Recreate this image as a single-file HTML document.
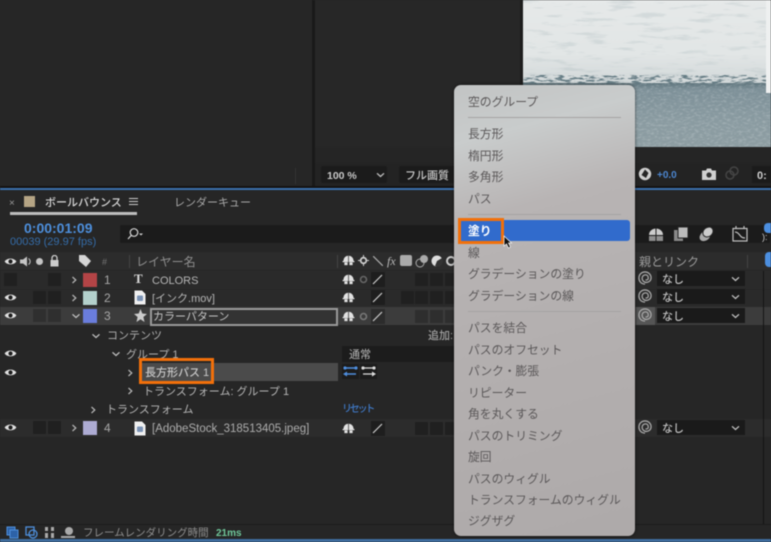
<!DOCTYPE html>
<html lang="ja"><head><meta charset="utf-8"><style>
html,body{margin:0;padding:0;background:#262626}
#p{position:relative;width:771px;height:542px;overflow:hidden;background:#262626;font-family:"Liberation Sans","Noto Sans CJK JP",sans-serif;filter:blur(.5px)}
#p div,#p span,#p svg{position:absolute}
.t{white-space:nowrap;font-size:11px;line-height:14px;color:#b0b0b0}
.d{margin-top:1px}
.b5{font-weight:500}
.m{left:468px;font-size:11.8px;line-height:16px;color:#5b5859;white-space:nowrap}
.sep{left:468px;width:153px;height:1px;background:#a5a3a3}
.box{width:13px;height:13px;background:#202020}
.sw{left:83px;width:14px;height:14px}
.sel{left:657px;width:88px;height:15px;background:#1a1a1a}
</style></head><body><div id="p">
<svg width="0" height="0">
<defs>
<symbol id="eye" viewBox="0 0 14 10"><path d="M.5 5C3 .8 11 .8 13.500 5 11 9.200 3 9.200 .5 5Z" fill="#e0e0e0"/><circle cx="7" cy="5" r="2.300" fill="#1c1c1c"/></symbol>
<symbol id="shy" viewBox="0 0 14 12"><path d="M1.500 6.500C1.500 2.500 4.500 .8 7 .8s5.500 1.700 5.500 5.700Z" fill="#e2e2e2"/><path d="M.5 6.500h13v1.300H.5Z" fill="#e2e2e2"/><path d="M2.500 8v3h3.500V8M8 8v3h3.500V8" fill="#e2e2e2"/><path d="M7 1v10.500" stroke="#333" stroke-width=".8"/></symbol>
<symbol id="sp" viewBox="0 0 12 12"><path d="M6 11.200C2.500 11.200 .8 8.500 .8 6 .8 3 3 .8 6 .8s5.200 2.400 5.200 5c0 2.500-2 4-4 4S3.500 8.300 3.500 6.300 5 3.300 6.500 3.300 8.800 4.500 8.800 6 7.500 8 6.500 7.500" fill="none" stroke="#a8a8a8" stroke-width="1.100"/></symbol>
<symbol id="doc" viewBox="0 0 12 15"><path d="M.5.5h7.500l3.500 3.500v10.500H.5Z" fill="#f0f0f0"/><rect x="3" y="5.500" width="6" height="5.500" rx="1" fill="#7b93b5"/></symbol>
<symbol id="ch" viewBox="0 0 8 8"><path d="M2.500 1 5.800 4 2.500 7" fill="none" stroke="#b5b5b5" stroke-width="1.200"/></symbol>
<symbol id="dn" viewBox="0 0 10 8"><path d="M1.500 2.300 5 5.500l3.500-3.200" fill="none" stroke="#c0c0c0" stroke-width="1.300"/></symbol>
<filter id="cr" x="0" y="0" width="100%" height="100%"><feTurbulence type="fractalNoise" baseFrequency=".035 .22" numOctaves="5" seed="4"/><feColorMatrix values="0 0 0 0 .42 0 0 0 0 .5 0 0 0 0 .52 5 0 0 0 -2.750"/></filter>
<filter id="fl" x="0" y="0" width="100%" height="100%"><feTurbulence type="fractalNoise" baseFrequency=".25 .5" numOctaves="3" seed="9"/><feColorMatrix values="0 0 0 0 .82 0 0 0 0 .86 0 0 0 0 .87 3 0 0 0 -1.350"/></filter>
<filter id="ed" x="0" y="0" width="100%" height="100%"><feTurbulence type="fractalNoise" baseFrequency=".12 .5" numOctaves="3" seed="2"/><feColorMatrix values="0 0 0 0 .13 0 0 0 0 .2 0 0 0 0 .23 6 0 0 0 -2.900"/></filter>
</defs></svg>

<!-- top panels -->
<div style="left:312px;top:0;width:3px;height:186px;background:#191919"></div>
<div style="left:315px;top:0;width:205px;height:163px;background:#272727"></div>
<div style="left:520px;top:0;width:3px;height:163px;background:#1d1d1d"></div>
<div style="left:523px;top:83px;width:248px;height:64px;background:linear-gradient(180deg,#5f757d,#7d9098 10%,#8a9ba1 60%,#8d9da2)"></div>
<svg style="left:523px;top:83px;opacity:.22" width="248" height="64"><rect width="248" height="64" filter="url(#fl)"/></svg>
<div style="left:523px;top:0;width:243px;height:83px;background:linear-gradient(180deg,#e6e9e9,#e2e6e6 65%,#d2d8d9)"></div>
<svg style="left:523px;top:0;opacity:.3" width="243" height="83"><rect width="243" height="83" filter="url(#cr)"/></svg>
<svg style="left:523px;top:0" width="243" height="83"><rect y="75" width="243" height="8" filter="url(#ed)"/></svg>
<div style="left:766px;top:0;width:5px;height:93px;background:#eef0f0"></div>
<div style="left:315px;top:147px;width:456px;height:16px;background:#252525"></div>
<div style="left:315px;top:163px;width:456px;height:23px;background:#232323"></div>
<div style="left:295px;top:168px;width:1px;height:16px;background:#333"></div>
<div style="left:0;top:186px;width:771px;height:2px;background:#141212"></div>
<div style="left:0;top:188px;width:771px;height:2px;background:#3a70ad"></div>

<div style="left:321px;top:166px;width:66px;height:17px;background:#1b1b1b;border-radius:2px"></div>
<span class="t d" style="left:327px;top:168px;font-size:10.500px;font-weight:700;color:#c8c8c8">100 %</span>
<svg style="left:375px;top:171px" width="11" height="8"><use href="#dn"/></svg>
<div style="left:399px;top:166px;width:70px;height:17px;background:#1b1b1b;border-radius:2px"></div>
<span class="t d b5" style="left:405px;top:168px;color:#c8c8c8">フル画質</span>
<svg style="left:638px;top:167px" width="14" height="14" viewBox="0 0 14 14"><circle cx="7" cy="7" r="6.200" fill="#cfcfcf"/><path d="M7 2.500 10.500 6 8 11 3.500 8Z" fill="#262626"/></svg>
<span class="t d" style="left:657px;top:168px;font-size:10px;color:#4c86d0;font-weight:700">+0.0</span>
<svg style="left:701px;top:168px" width="16" height="13" viewBox="0 0 16 13"><path d="M1 2.500h4l1-2h4l1 2h4V12H1Z" fill="#d0d0d0"/><circle cx="8" cy="7" r="2.600" fill="#333"/></svg>
<svg style="left:724px;top:166px" width="16" height="15" viewBox="0 0 16 15" fill="none" stroke="#444" stroke-width="1.500"><circle cx="6" cy="9" r="4"/><circle cx="10" cy="5" r="4"/></svg>
<div style="left:752px;top:166px;width:19px;height:17px;background:#1b1b1b"></div>
<span class="t d" style="left:757px;top:168px;color:#ccc;font-weight:700">0:</span>

<!-- tabs -->
<span class="t" style="left:9px;top:197px;font-size:10px;color:#999">×</span>
<div style="left:24px;top:196px;width:11px;height:11px;background:#b5a484"></div>
<span class="t d b5" style="left:45px;top:195px;color:#d8d8d8">ボールバウンス</span>
<div style="left:129px;top:198px;width:9px;height:1px;background:#ccc;box-shadow:0 3px 0 #ccc,0 6px 0 #ccc"></div>
<div style="left:10px;top:212px;width:127px;height:3px;background:#bdbdbd"></div>
<span class="t d" style="left:174px;top:195px;color:#a8a8a8">レンダーキュー</span>

<!-- time / search -->
<span class="t" style="left:24px;top:220px;font-size:14px;line-height:16px;font-weight:700;color:#4d8fdc">0:00:01:09</span>
<span class="t" style="left:10px;top:235px;font-size:11px;color:#356ca8">00039 (29.97 fps)</span>
<div style="left:120px;top:225px;width:650px;height:18px;background:#1b1b1b;border-radius:2px"></div>
<svg style="left:126px;top:227px" width="18" height="13" viewBox="0 0 18 13" fill="none" stroke="#d5d5d5" stroke-width="1.200"><circle cx="8" cy="5.500" r="3.800"/><path d="M5.300 8.300 2 12"/><path d="M13 6.500h4l-2 2Z" fill="#d5d5d5" stroke="none"/></svg>
<svg style="left:648px;top:227px" width="16" height="15" viewBox="0 0 16 15"><path d="M1 8C1 3.500 5 1.500 8 1.500S15 3.500 15 8Z" fill="#ccc"/><path d="M1 9h14v5H1Z" fill="#8f8f8f"/><path d="M8 1v13" stroke="#222"/></svg>
<svg style="left:673px;top:226px" width="16" height="16" viewBox="0 0 16 16"><path d="M1 4h9v11H1Z" fill="#888"/><path d="M5 1h10v11H5Z" fill="#bbb" stroke="#262626"/></svg>
<svg style="left:698px;top:226px" width="17" height="16" viewBox="0 0 17 16"><ellipse cx="7" cy="10" rx="6" ry="4.500" transform="rotate(-40 7 10)" fill="#aaa"/><ellipse cx="10" cy="6" rx="5.500" ry="4.500" transform="rotate(-40 10 6)" fill="#ccc" stroke="#262626"/></svg>
<svg style="left:732px;top:225px" width="16" height="17" viewBox="0 0 16 17" fill="none" stroke="#c0c0c0" stroke-width="1.200"><path d="M1 3.500h14V16H1ZM4 1v3M12 1v3"/><path d="M3 7c5 0 4 6 10 6"/></svg>
<div style="left:764px;top:223px;width:7px;height:10px;background:#4c8fe0;border-radius:4px 0 0 4px"></div>
<span class="t" style="left:762px;top:230px;font-size:9px;color:#ccc">):</span>

<!-- header -->
<div style="left:0;top:252px;width:771px;height:18px;background:#2c2c2c"></div>
<svg style="left:4px;top:257px" width="13" height="9"><use href="#eye"/></svg>
<svg style="left:19px;top:256px" width="13" height="11" viewBox="0 0 13 11"><path d="M1 3.500h3L8 .5v10L4 7.500H1Z" fill="#c4c4c4"/><path d="M9.500 2.500c2.200 1.500 2.200 4.500 0 6" stroke="#c4c4c4" fill="none"/></svg>
<div style="left:36px;top:258px;width:7px;height:7px;border-radius:50%;background:#c4c4c4"></div>
<svg style="left:50px;top:255px" width="9" height="12" viewBox="0 0 9 12"><path d="M.5 5h8v6.500h-8Z" fill="#ccc"/><path d="M2 5V3a2.500 2.500 0 0 1 5 0v2" fill="none" stroke="#ccc" stroke-width="1.300"/></svg>
<svg style="left:78px;top:254px" width="14" height="14" viewBox="0 0 14 14"><path d="M1 1h6l6 6-5 6-7-6Z" fill="#d5d5d5"/></svg>
<span class="t" style="left:102px;top:255px;font-size:9px;color:#777">#</span>
<div style="left:129px;top:255px;width:1px;height:13px;background:#444"></div>
<span class="t d" style="left:136px;top:254px;font-size:12px;color:#8e8e8e">レイヤー名</span>
<div style="left:337px;top:255px;width:1px;height:13px;background:#444"></div>
<svg style="left:342px;top:255px" width="13" height="11"><use href="#shy"/></svg>
<svg style="left:358px;top:255px" width="11" height="11" viewBox="0 0 11 11"><circle cx="5.500" cy="5.500" r="2.800" fill="none" stroke="#ccc" stroke-width="1.800"/><path d="M5.500 0v11M0 5.500h11" stroke="#ccc" stroke-dasharray="2 7"/></svg>
<svg style="left:373px;top:256px" width="10" height="10"><path d="M0 0 10 10" stroke="#aaa" stroke-width="1.200"/></svg>
<span class="t" style="left:387px;top:254px;font-family:'Liberation Serif',serif;font-style:italic;font-size:12px;color:#bbb">fx</span>
<div style="left:400px;top:255px;width:12px;height:11px;background:#aaa;border-radius:2px"></div>
<svg style="left:415px;top:254px" width="14" height="14" viewBox="0 0 14 14"><circle cx="5" cy="9" r="4" fill="none" stroke="#aaa"/><circle cx="9" cy="5" r="4" fill="#aaa"/></svg>
<svg style="left:431px;top:255px" width="12" height="12" viewBox="0 0 12 12"><circle cx="6" cy="6" r="5.500" fill="#ddd"/><path d="M6 6 11 3A5.500 5.500 0 0 1 4 11Z" fill="#333"/></svg>
<svg style="left:445px;top:255px" width="10" height="12" viewBox="0 0 10 12"><circle cx="6" cy="6" r="4" fill="none" stroke="#ccc" stroke-width="2"/></svg>
<span class="t d" style="left:639px;top:254px;font-size:12px;color:#9b9b9b">親とリンク</span>
<div style="left:747px;top:255px;width:1px;height:13px;background:#444"></div>
<div style="left:765px;top:252px;width:6px;height:15px;background:#4c8fe0;border-radius:4px 0 0 4px"></div>

<!-- rows -->
<div style="left:0;top:271px;width:771px;height:18px;background:#2a2a2a"></div>
<div style="left:0;top:289.500px;width:771px;height:18px;background:#2a2a2a"></div>
<div style="left:0;top:307px;width:771px;height:18px;background:#3c3c3c"></div>
<div style="left:0;top:419px;width:771px;height:18px;background:#2c2c2c"></div>
<div style="left:140px;top:363px;width:198px;height:18px;background:#4b4b4b"></div>
<div style="left:763px;top:271px;width:1px;height:254px;background:#141414"></div>
<div style="left:0;top:524px;width:771px;height:1px;background:#1b1b1b"></div>

<div class="box" style="left:4px;top:273px"></div><div class="box" style="left:48px;top:273px"></div>
<div class="box" style="left:33px;top:291px"></div><div class="box" style="left:48px;top:291px"></div>
<div class="box" style="left:33px;top:309px;background:#2f2f2f"></div><div class="box" style="left:48px;top:309px;background:#2f2f2f"></div>
<div class="box" style="left:33px;top:421px"></div><div class="box" style="left:48px;top:421px"></div>
<svg style="left:4px;top:293px" width="13" height="9"><use href="#eye"/></svg>
<svg style="left:4px;top:311px" width="13" height="9"><use href="#eye"/></svg>
<svg style="left:4px;top:349px" width="13" height="9"><use href="#eye"/></svg>
<svg style="left:4px;top:368px" width="13" height="9"><use href="#eye"/></svg>
<svg style="left:4px;top:423px" width="13" height="9"><use href="#eye"/></svg>

<svg style="left:70px;top:276px" width="8" height="8"><use href="#ch"/></svg>
<svg style="left:70px;top:294px" width="8" height="8"><use href="#ch"/></svg>
<svg style="left:71px;top:312px" width="10" height="8"><use href="#dn"/></svg>
<svg style="left:70px;top:424px" width="8" height="8"><use href="#ch"/></svg>
<div class="sw" style="top:273px;background:#b44446"></div>
<div class="sw" style="top:291px;background:#b3d0cc"></div>
<div class="sw" style="top:309px;background:#6a7ddc"></div>
<div class="sw" style="top:421px;background:#adabd2"></div>
<span class="t" style="left:104px;top:273px;font-size:12px;color:#a8a8a8">1</span>
<span class="t" style="left:104px;top:291px;font-size:12px;color:#a8a8a8">2</span>
<span class="t" style="left:104px;top:309px;font-size:12px;color:#a8a8a8">3</span>
<span class="t" style="left:104px;top:421px;font-size:12px;color:#a8a8a8">4</span>
<span class="t" style="left:134px;top:272px;font-family:'Liberation Serif',serif;font-size:13px;font-weight:700;color:#d8d8d8">T</span>
<svg style="left:134px;top:290px" width="12" height="15"><use href="#doc"/></svg>
<svg style="left:134px;top:309px" width="13" height="13" viewBox="0 0 13 13"><path d="M6.500 0 8.300 4.500 13 5 9.400 8 10.500 13 6.500 10.300 2.500 13 3.600 8 0 5 4.700 4.500Z" fill="#ccc"/></svg>
<svg style="left:134px;top:421px" width="12" height="15"><use href="#doc"/></svg>
<span class="t d" style="left:152px;top:273px;color:#b5b5b5">COLORS</span>
<span class="t d" style="left:152px;top:291px;color:#b5b5b5">[インク.mov]</span>
<div style="left:150px;top:308px;width:184px;height:14px;border:2px solid #999;background:#333"></div>
<span class="t d" style="left:153px;top:309px;color:#c4c4c4">カラーパターン</span>
<svg style="left:91px;top:332px" width="10" height="8"><use href="#dn"/></svg>
<span class="t d" style="left:107px;top:328px;color:#b0b0b0">コンテンツ</span>
<svg style="left:111px;top:350px" width="10" height="8"><use href="#dn"/></svg>
<span class="t d" style="left:126px;top:347px;color:#b0b0b0">グループ 1</span>
<svg style="left:126px;top:369px" width="8" height="8"><use href="#ch"/></svg>
<span class="t d b5" style="left:145px;top:365px;color:#c8c8c8">長方形パス 1</span>
<svg style="left:126px;top:387px" width="8" height="8"><use href="#ch"/></svg>
<span class="t d" style="left:143px;top:384px;color:#b5b5b5">トランスフォーム: グループ 1</span>
<svg style="left:89px;top:406px" width="8" height="8"><use href="#ch"/></svg>
<span class="t" style="left:106px;top:403px;color:#b5b5b5">トランスフォーム</span>
<span class="t d" style="left:152px;top:421px;color:#adadad;font-size:11.500px">[AdobeStock_318513405.jpeg]</span>

<div style="left:139px;top:358px;width:69px;height:20px;border:3px solid #f2700a"></div>

<!-- switches -->
<svg style="left:342px;top:274px" width="13" height="11"><use href="#shy"/></svg>
<svg style="left:342px;top:292px" width="13" height="11"><use href="#shy"/></svg>
<svg style="left:342px;top:311px" width="13" height="11"><use href="#shy"/></svg>
<svg style="left:342px;top:423px" width="13" height="11"><use href="#shy"/></svg>
<svg style="left:358px;top:274px" width="11" height="11" viewBox="0 0 11 11"><circle cx="5.500" cy="5.500" r="3" fill="none" stroke="#666" stroke-width="1.600"/></svg>
<svg style="left:358px;top:311px" width="11" height="11" viewBox="0 0 11 11"><circle cx="5.500" cy="5.500" r="3" fill="none" stroke="#777" stroke-width="1.600"/></svg>
<div style="left:371px;top:272px;width:14px;height:15px;background:#1e1e1e"></div>
<div style="left:371px;top:290px;width:14px;height:15px;background:#1e1e1e"></div>
<div style="left:371px;top:309px;width:14px;height:15px;background:#2c2c2c"></div>
<div style="left:371px;top:421px;width:14px;height:15px;background:#1e1e1e"></div>
<svg style="left:372px;top:274px" width="11" height="11"><path d="M1 10 10 1" stroke="#ccc" stroke-width="1.200"/></svg>
<svg style="left:372px;top:292px" width="11" height="11"><path d="M1 10 10 1" stroke="#ccc" stroke-width="1.200"/></svg>
<svg style="left:372px;top:311px" width="11" height="11"><path d="M1 10 10 1" stroke="#ccc" stroke-width="1.200"/></svg>
<svg style="left:372px;top:423px" width="11" height="11"><path d="M1 10 10 1" stroke="#ccc" stroke-width="1.200"/></svg>
<div class="box" style="left:415px;top:273px"></div><div class="box" style="left:430px;top:273px"></div><div class="box" style="left:445px;top:273px"></div>
<div class="box" style="left:401px;top:291px"></div><div class="box" style="left:415px;top:291px"></div><div class="box" style="left:430px;top:291px"></div><div class="box" style="left:445px;top:291px"></div>
<div class="box" style="left:415px;top:310px;background:#2e2e2e"></div><div class="box" style="left:430px;top:310px;background:#2e2e2e"></div><div class="box" style="left:445px;top:310px;background:#2e2e2e"></div>
<div class="box" style="left:415px;top:422px"></div><div class="box" style="left:430px;top:422px"></div><div class="box" style="left:445px;top:422px"></div>
<span class="t d b5" style="left:428px;top:328px;color:#a0a0a0">追加:</span>
<div style="left:342px;top:346px;width:112px;height:16px;background:#1c1c1c"></div>
<span class="t d" style="left:349px;top:347px;color:#b8b8b8">通常</span>
<svg style="left:342px;top:364px" width="17" height="15" viewBox="0 0 17 15"><rect width="17" height="15" fill="#1c1c1c"/><path d="M3 4h11M3 10h11" stroke="#4f8fe0" stroke-width="1.500"/><circle cx="3" cy="4" r="1.600" fill="#4f8fe0"/><circle cx="14" cy="4" r="1.600" fill="#4f8fe0"/><path d="M1 10 5 7.500v5Z" fill="#4f8fe0"/></svg>
<svg style="left:360px;top:364px" width="17" height="15" viewBox="0 0 17 15"><rect width="17" height="15" fill="#1c1c1c"/><path d="M3 4h11M3 10h11" stroke="#ddd" stroke-width="1.300"/><circle cx="3" cy="4" r="1.600" fill="#ddd"/><circle cx="14" cy="4" r="1.600" fill="#ddd"/><path d="M16 10 12 7.500v5Z" fill="#ddd"/></svg>
<span class="t" style="left:342px;top:403px;font-size:10px;color:#3f78c4;font-weight:500;letter-spacing:-2.200px">リセット</span>

<!-- parent -->
<svg style="left:638px;top:271px" width="14" height="14"><use href="#sp"/></svg>
<svg style="left:638px;top:289px" width="14" height="14"><use href="#sp"/></svg>
<div style="left:636px;top:307px;width:19px;height:18px;background:#555"></div>
<svg style="left:638px;top:308px" width="14" height="14"><use href="#sp"/></svg>
<svg style="left:638px;top:420px" width="14" height="14"><use href="#sp"/></svg>
<div class="sel" style="top:271px"></div>
<div class="sel" style="top:289px"></div>
<div class="sel" style="top:308px"></div>
<div class="sel" style="top:420px"></div>
<span class="t d b5" style="left:662px;top:272px;color:#c0c0c0">なし</span>
<span class="t d b5" style="left:662px;top:290px;color:#c0c0c0">なし</span>
<span class="t d b5" style="left:662px;top:309px;color:#c0c0c0">なし</span>
<span class="t d b5" style="left:662px;top:421px;color:#c0c0c0">なし</span>
<svg style="left:730px;top:275px" width="11" height="8"><use href="#dn"/></svg>
<svg style="left:730px;top:293px" width="11" height="8"><use href="#dn"/></svg>
<svg style="left:730px;top:312px" width="11" height="8"><use href="#dn"/></svg>
<svg style="left:730px;top:424px" width="11" height="8"><use href="#dn"/></svg>

<!-- status -->
<svg style="left:6px;top:526px" width="13" height="13" viewBox="0 0 13 13"><rect x="1" y="1" width="8" height="8" fill="#2d62a8" stroke="#4d8fdc"/><rect x="4" y="4" width="8" height="8" fill="#2d62a8" stroke="#4d8fdc"/></svg>
<svg style="left:25px;top:526px" width="13" height="13" viewBox="0 0 13 13" fill="none" stroke="#4d8fdc" stroke-width="1.300"><rect x="1" y="1" width="8" height="8"/><circle cx="8" cy="8" r="4"/></svg>
<svg style="left:44px;top:526px" width="11" height="13" viewBox="0 0 11 13"><path d="M1 1h3v4H1ZM7 1h3v4H7ZM1 7h3v5H1ZM7 7h3v5H7Z" fill="#aaa"/></svg>
<svg style="left:61px;top:527px" width="14" height="11" viewBox="0 0 14 11"><circle cx="8" cy="4" r="4" fill="#aaa"/><path d="M0 9h14v2H0Z" fill="#aaa"/></svg>
<span class="t d" style="left:83px;top:525px;font-size:10.500px;color:#8e8e8e">フレームレンダリング時間</span>
<span class="t d" style="left:216px;top:526px;font-size:10px;font-weight:700;color:#6fc79a">21ms</span>
<div style="left:0;top:539px;width:771px;height:3px;background:#3f6d9e"></div>

<!-- menu -->
<div style="left:454px;top:85px;width:181px;height:451px;border-radius:7px;background:linear-gradient(165deg,#c2c4c4 0,#c9cccc 12%,#b8b4b4 28%,#b3afaf 60%,#aeaaaa 100%);box-shadow:0 0 3px rgba(0,0,0,.6)"></div>
<span class="m" style="top:94px">空のグループ</span>
<div class="sep" style="top:117px"></div>
<span class="m" style="top:126px">長方形</span>
<span class="m" style="top:148px">楕円形</span>
<span class="m" style="top:169px">多角形</span>
<span class="m" style="top:191px">パス</span>
<div class="sep" style="top:214px"></div>
<div style="left:459px;top:220px;width:171px;height:21px;border-radius:3px;background:#316bcc"></div>
<span class="m" style="top:223px;color:#fff;font-weight:700">塗り</span>
<div style="left:458px;top:218px;width:40px;height:20px;border:3px solid #f2700a"></div>
<svg style="left:503px;top:235px" width="10" height="14" viewBox="0 0 10 14"><path d="M1 1v10l2.500-2 2 4 2-1-2-4H8.500Z" fill="#111" stroke="#eee" stroke-width=".8"/></svg>
<span class="m" style="top:245px">線</span>
<span class="m" style="top:266px">グラデーションの塗り</span>
<span class="m" style="top:288px">グラデーションの線</span>
<div class="sep" style="top:311px"></div>
<span class="m" style="top:320px">パスを結合</span>
<span class="m" style="top:342px">パスのオフセット</span>
<span class="m" style="top:363px">パンク・膨張</span>
<span class="m" style="top:385px">リピーター</span>
<span class="m" style="top:406px">角を丸くする</span>
<span class="m" style="top:428px">パスのトリミング</span>
<span class="m" style="top:449px">旋回</span>
<span class="m" style="top:471px">パスのウィグル</span>
<span class="m" style="top:492px">トランスフォームのウィグル</span>
<span class="m" style="top:513px">ジグザグ</span>
</div></body></html>
